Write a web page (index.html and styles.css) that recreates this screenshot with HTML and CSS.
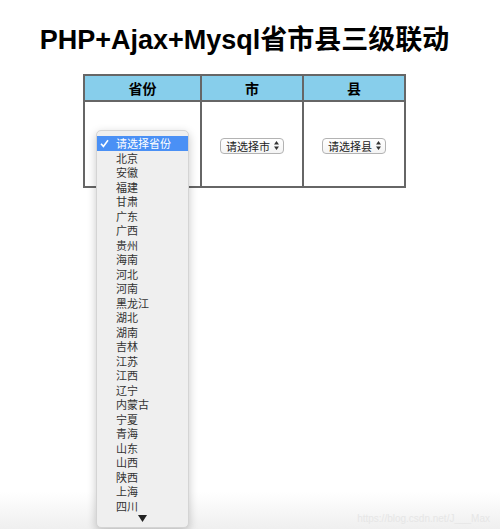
FILE: index.html
```html
<!DOCTYPE html>
<html lang="zh-CN">

<head>
    <meta charset="UTF-8">
    <meta name="viewport" content="width=device-width, initial-scale=1.0">
    <title>PHP+Ajax+Mysql省市县三级联动</title>
    <link rel="stylesheet" href="styles.css">
</head>

<body>
    <div class="page">
        <h1 class="title">PHP+Ajax+Mysql省市县三级联动</h1>
        <table class="area">
            <tr>
                <th class="col-prov">省份</th>
                <th class="col-city">市</th>
                <th class="col-county">县</th>
            </tr>
            <tr>
                <td>
                    <div class="field">
                        <span class="picker">
                            <select id="province">
                                <option value="">请选择省份</option>
                            </select>
                            <svg class="arrows" width="5" height="9" viewBox="0 0 5 9">
                                <path d="M0 3.6 2.5 0 5 3.6Z M0 5.4 2.5 9 5 5.4Z" />
                            </svg>
                        </span>
                        <!-- 下拉展开的省份列表 -->
                        <ul class="menu">
                            <li class="on">
                                <svg class="tick" width="9" height="9" viewBox="0 0 9 9">
                                    <path d="M1 4.8 3.4 7.4 8 1.2" />
                                </svg>请选择省份
                            </li>
                            <li>北京</li>
                            <li>安徽</li>
                            <li>福建</li>
                            <li>甘肃</li>
                            <li>广东</li>
                            <li>广西</li>
                            <li>贵州</li>
                            <li>海南</li>
                            <li>河北</li>
                            <li>河南</li>
                            <li>黑龙江</li>
                            <li>湖北</li>
                            <li>湖南</li>
                            <li>吉林</li>
                            <li>江苏</li>
                            <li>江西</li>
                            <li>辽宁</li>
                            <li>内蒙古</li>
                            <li>宁夏</li>
                            <li>青海</li>
                            <li>山东</li>
                            <li>山西</li>
                            <li>陕西</li>
                            <li>上海</li>
                            <li>四川</li>
                            <li class="more">
                                <svg width="9" height="7" viewBox="0 0 9 7">
                                    <path d="M0 0H9L4.5 7Z" />
                                </svg>
                            </li>
                        </ul>
                    </div>
                </td>
                <td>
                    <span class="picker">
                        <select id="city">
                            <option value="">请选择市</option>
                        </select>
                        <svg class="arrows" width="5" height="9" viewBox="0 0 5 9">
                            <path d="M0 3.6 2.5 0 5 3.6Z M0 5.4 2.5 9 5 5.4Z" />
                        </svg>
                    </span>
                </td>
                <td>
                    <span class="picker">
                        <select id="county">
                            <option value="">请选择县</option>
                        </select>
                        <svg class="arrows" width="5" height="9" viewBox="0 0 5 9">
                            <path d="M0 3.6 2.5 0 5 3.6Z M0 5.4 2.5 9 5 5.4Z" />
                        </svg>
                    </span>
                </td>
            </tr>
        </table>
    </div>
    <span class="mark">https://blog.csdn.net/J___Max</span>
</body>

</html>
```

FILE: styles.css
```css
* {
    padding: 0;
    margin: 0;
    list-style: none;
}

html {
    min-height: 100%;
    background: linear-gradient(#fff 492px, #efefef 529px);
}

body {
    position: relative;
    min-height: 529px;
    font-family: "Liberation Sans", "Noto Sans CJK SC", sans-serif;
    color: #000;
}

.page {
    width: 489px;
    padding-top: 25px;
}

.title {
    font-size: 27px;
    line-height: 30px;
    font-weight: bold;
    text-align: center;
}

/* 省市县表格 */
.area {
    border-collapse: collapse;
    margin: 19px auto 0;
}

.area th,
.area td {
    border: 2px solid #666;
    text-align: center;
    vertical-align: middle;
}

.area th {
    height: 24px;
    background: #87ceeb;
    font-size: 14px;
    font-weight: bold;
}

.col-prov {
    width: 115px;
}

.col-city,
.col-county {
    width: 100px;
}

.area td {
    height: 82px;
    padding-top: 2px;
}

.field {
    position: relative;
    display: inline-block;
}

.picker {
    display: inline-flex;
    align-items: center;
    gap: 4px;
    height: 16px;
    padding: 0 4px 0 5px;
    border: 1px solid #b3b3b3;
    border-radius: 4px;
    background: linear-gradient(#fff, #f4f4f4);
    box-sizing: border-box;
    vertical-align: middle;
}

.picker select {
    appearance: none;
    -webkit-appearance: none;
    border: 0;
    padding: 0;
    background: transparent;
    font: 11px/14px "Noto Sans CJK SC", sans-serif;
    color: #222;
    outline: none;
}

.arrows {
    fill: #333;
    display: block;
}

/* 展开的下拉菜单 */
.menu {
    position: absolute;
    left: -9px;
    top: -6px;
    width: 93px;
    padding: 5px 0 3px;
    background: #efefef;
    border: 1px solid #d4d4d4;
    border-radius: 5px;
    box-shadow: 0 3px 10px rgba(0, 0, 0, 0.22);
    box-sizing: border-box;
    text-align: left;
    z-index: 10;
}

.menu li {
    position: relative;
    height: 14.5px;
    line-height: 14.5px;
    padding-left: 19px;
    font-family: "Noto Sans CJK SC", sans-serif;
    font-size: 11px;
    color: #333;
}

.menu li.on {
    background: #4a90f5;
    color: #fff;
}

.tick {
    position: absolute;
    left: 3px;
    top: 3px;
    fill: none;
    stroke: #fff;
    stroke-width: 1.6;
}

.menu li.more {
    height: 11px;
    padding: 0;
    display: flex;
    justify-content: center;
    align-items: center;
}

.more svg {
    fill: #222;
}

.mark {
    position: absolute;
    right: 10px;
    bottom: 5px;
    font-size: 10px;
    color: #e6e6e6;
}
```
